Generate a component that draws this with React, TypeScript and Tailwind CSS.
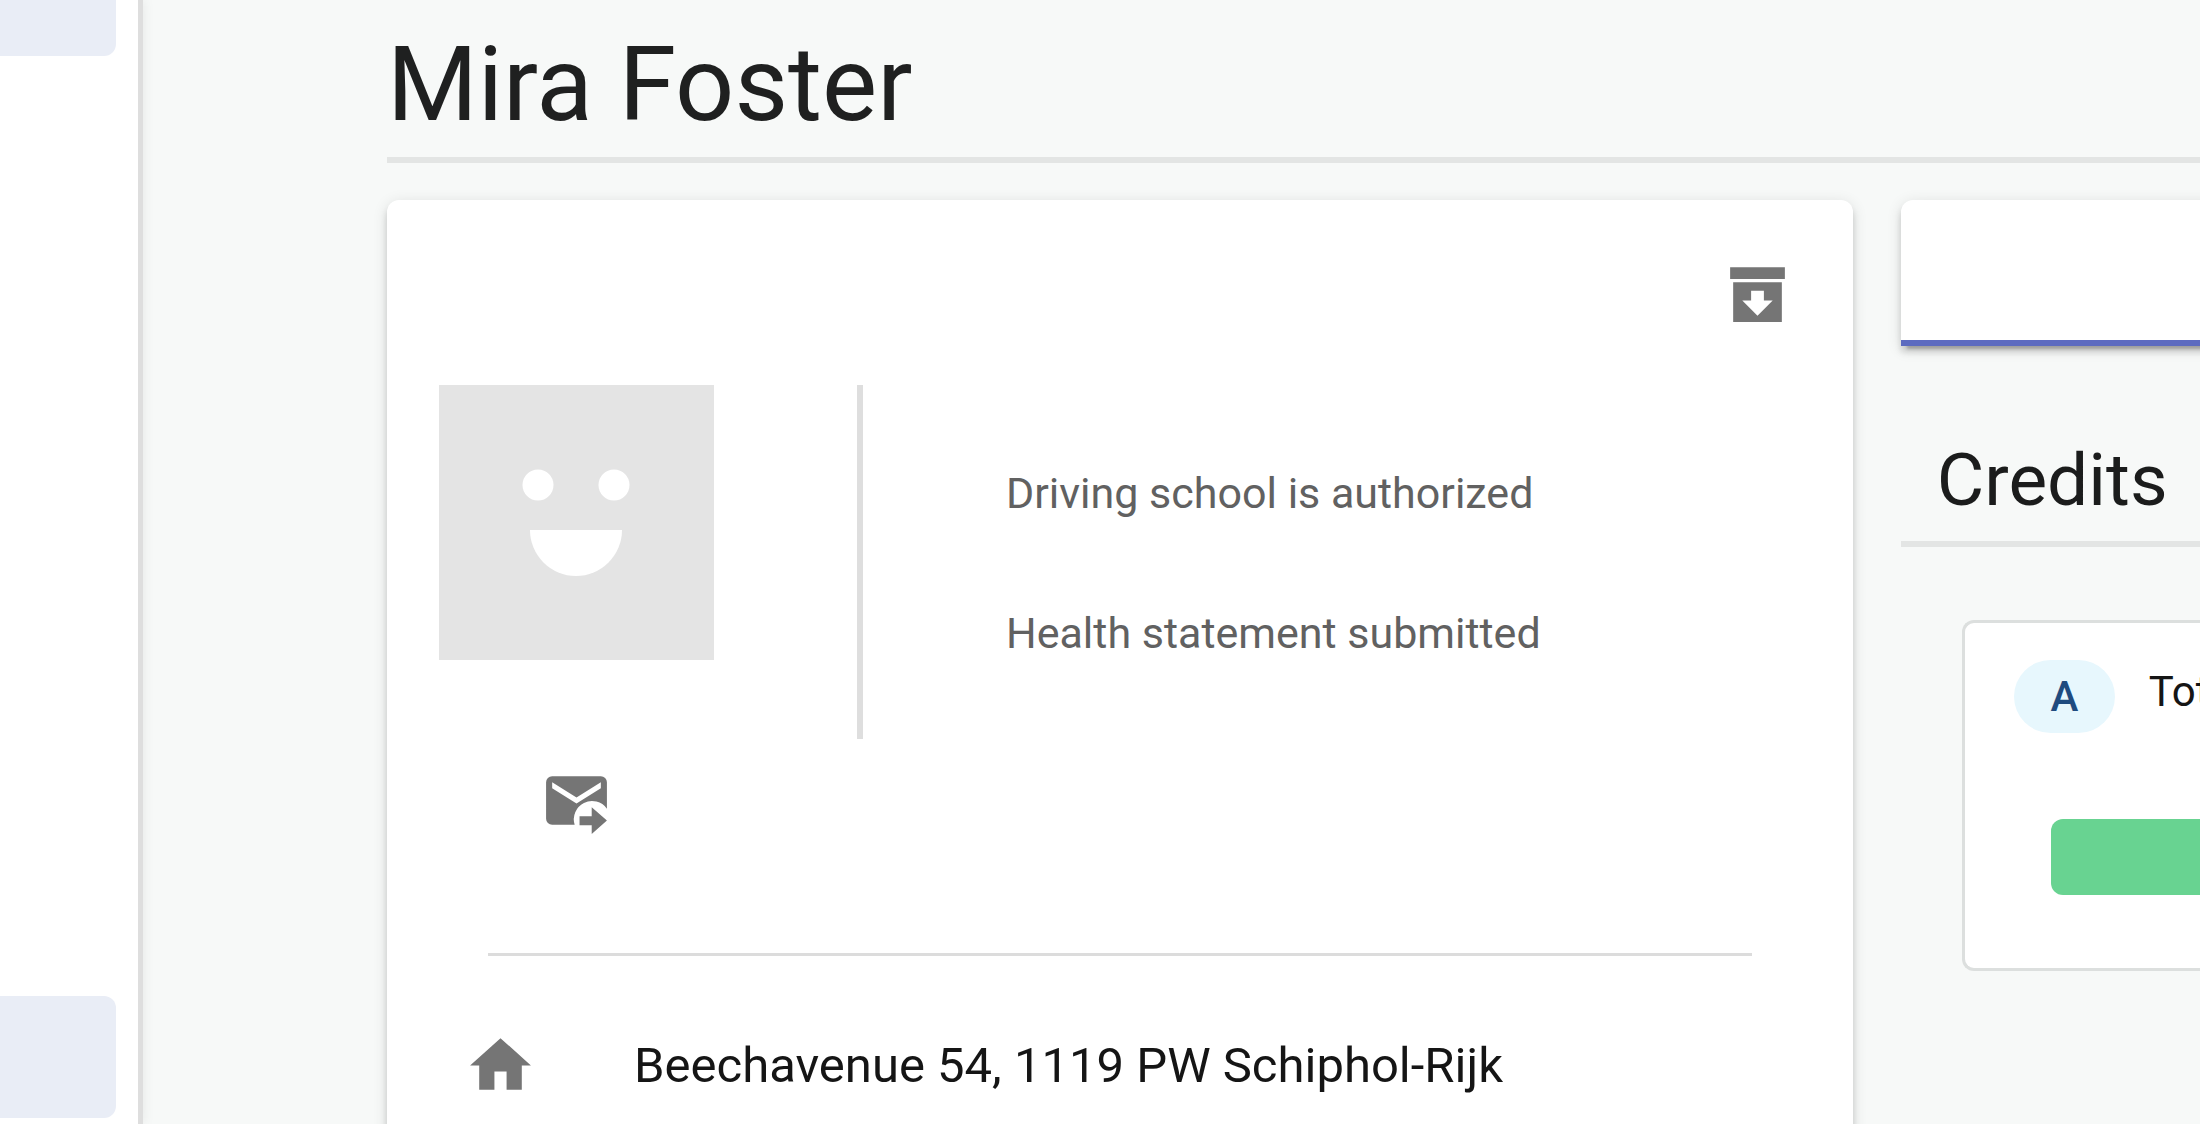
const elevation =
  "shadow-[0_9px_3px_-6px_rgba(0,0,0,0.2),0_6px_6px_rgba(0,0,0,0.14),0_3px_15px_rgba(0,0,0,0.12)]";

function ArchiveIcon() {
  return (
    <svg viewBox="0 0 24 24" className="size-[73px]" fill="currentColor" aria-hidden="true">
      <path d="M3 3h18v3.9H3z" />
      <path
        fillRule="evenodd"
        d="M4 8h16v13H4zM9.9 10.8V14H7l5 5 5-5h-2.9v-3.2z"
      />
    </svg>
  );
}

function ForwardMailIcon() {
  return (
    <svg viewBox="0 0 24 24" className="size-[73px]" fill="currentColor" aria-hidden="true">
      <path
        fillRule="evenodd"
        d="M4 4h16a2 2 0 0 1 2 2v8.7A6 6 0 0 0 11.4 20H4a2 2 0 0 1-2-2V6a2 2 0 0 1 2-2zM20 8V6l-8 5-8-5v2l8 5z"
      />
      <path d="M13 17.2h4v-3l5 4.4-5 4.4v-2.9h-4z" />
    </svg>
  );
}

function HomeIcon() {
  return (
    <svg viewBox="0 0 24 24" className="size-[73px] shrink-0 text-[#757575]" fill="currentColor" aria-hidden="true">
      <path d="M10 20v-6h4v6h5v-8h3L12 3 2 12h3v8z" />
    </svg>
  );
}

function Avatar() {
  return (
    <svg viewBox="0 0 275 275" className="size-[275px]" role="img" aria-label="Profile picture">
      <rect width="275" height="275" fill="#e4e4e4" />
      <circle cx="99" cy="100" r="15.5" fill="#fff" />
      <circle cx="175" cy="100" r="15.5" fill="#fff" />
      <path d="M91 145h92a46 46 0 0 1-92 0z" fill="#fff" />
    </svg>
  );
}

function Sidebar() {
  return (
    <nav className="flex w-[143px] shrink-0 flex-col justify-between border-r-5 border-[#dedede] bg-white pr-[22px] pb-[6px] shadow-[0_0_12px_rgba(0,0,0,0.08)]">
      <a href="#overview" aria-label="Overview" className="h-14 rounded-br-xl bg-[#e9edf6]" />
      <a href="#students" aria-label="Students" className="h-[122px] rounded-r-xl bg-[#e9edf6]" />
    </nav>
  );
}

function ProfileCard() {
  return (
    <section className={`rounded-xl bg-white ${elevation}`}>
      <div className="flex justify-end pt-[58px] pr-[59px]">
        <button type="button" aria-label="Archive" className="text-[#757575]">
          <ArchiveIcon />
        </button>
      </div>

      <div className="flex items-start pt-[54px] pl-[52px]">
        <div className="flex flex-col items-center gap-[104px]">
          <Avatar />
          <button type="button" aria-label="Forward mail" className="text-[#757575]">
            <ForwardMailIcon />
          </button>
        </div>
        <div className="ml-[143px] flex h-[354px] flex-col gap-[76px] border-l-6 border-[#dedede] pt-[76px] pl-[143px] text-[43px] leading-16 text-[#616161]">
          <p>Driving school is authorized</p>
          <p>Health statement submitted</p>
        </div>
      </div>

      <hr className="mx-[101px] mt-[116px] border-t-3 border-[#dcdcdc]" />

      <div className="flex items-center gap-[97px] pt-[73px] pb-24 pl-[77px]">
        <HomeIcon />
        <address className="text-[49px] leading-18 text-[#151515] not-italic">
          Beechavenue 54, 1119 PW Schiphol-Rijk
        </address>
      </div>
    </section>
  );
}

function CreditsPanel() {
  return (
    <section className="min-w-0">
      <button
        type="button"
        aria-label="Credits tab"
        className={`block h-[146px] w-[calc(100%+24px)] rounded-tl-xl border-b-6 border-[#5c6bc0] bg-white ${elevation}`}
      />
      <h2 className="border-b-6 border-[#e3e5e4] pt-[84px] pb-[11px] pl-9 text-[73px] leading-[100px] text-[#1b1c1c]">
        Credits
      </h2>
      <div className="mt-[73px] ml-[61px] rounded-l-xl border-3 border-r-0 border-[#dcdfde] bg-white pt-[37px] pb-[73px]">
        <div className="flex items-start gap-[34px] overflow-hidden pl-[49px] text-[42px]">
          <span className="flex h-[73px] w-[101px] shrink-0 items-center justify-center rounded-full bg-[#e7f7fd] font-medium text-[#1f4b7f]">
            A
          </span>
          <span className="leading-16 whitespace-nowrap text-[#151515]">Total</span>
        </div>
        <div className="mt-[86px] ml-[86px] h-[76px] rounded-l-xl bg-[#68d391]" />
      </div>
    </section>
  );
}

export default function App() {
  return (
    <div className="flex h-screen overflow-hidden bg-[#f7f9f8] font-['Roboto',sans-serif]">
      <Sidebar />
      <main className="min-w-0 flex-1 pl-[244px]">
        <h1 className="border-b-6 border-[#e3e5e4] pt-[23px] pb-[10px] text-[104px] leading-[124px] text-[#1f2020]">
          Mira Foster
        </h1>
        <div className="mt-[37px] grid grid-cols-[minmax(0,1465fr)_minmax(0,299fr)] items-start gap-12">
          <ProfileCard />
          <CreditsPanel />
        </div>
      </main>
    </div>
  );
}
